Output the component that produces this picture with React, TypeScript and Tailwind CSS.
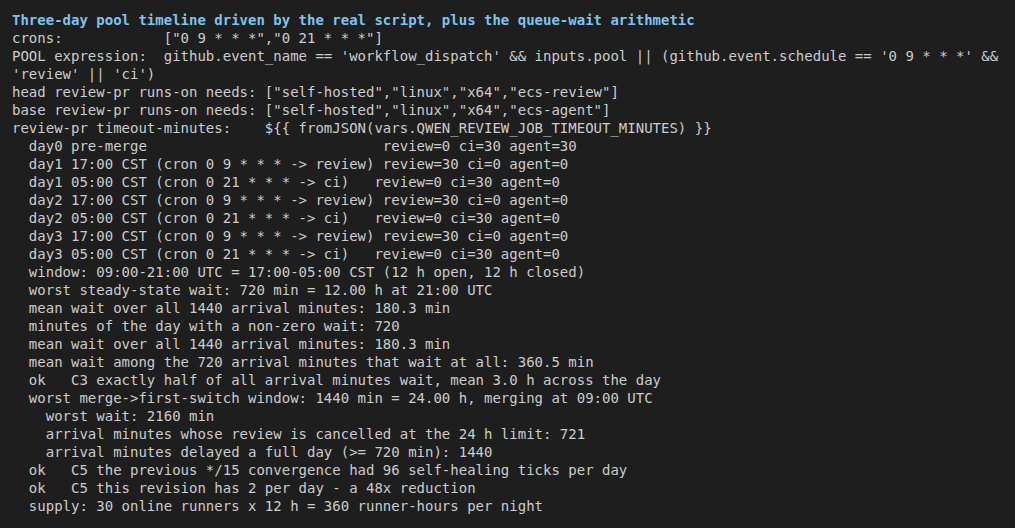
const lines: string[] = [
  "crons:            [\"0 9 * * *\",\"0 21 * * *\"]",
  "POOL expression:  github.event_name == 'workflow_dispatch' && inputs.pool || (github.event.schedule == '0 9 * * *' &&",
  "'review' || 'ci')",
  "head review-pr runs-on needs: [\"self-hosted\",\"linux\",\"x64\",\"ecs-review\"]",
  "base review-pr runs-on needs: [\"self-hosted\",\"linux\",\"x64\",\"ecs-agent\"]",
  "review-pr timeout-minutes:    ${{ fromJSON(vars.QWEN_REVIEW_JOB_TIMEOUT_MINUTES) }}",
  "  day0 pre-merge                            review=0 ci=30 agent=30",
  "  day1 17:00 CST (cron 0 9 * * * -> review) review=30 ci=0 agent=0",
  "  day1 05:00 CST (cron 0 21 * * * -> ci)   review=0 ci=30 agent=0",
  "  day2 17:00 CST (cron 0 9 * * * -> review) review=30 ci=0 agent=0",
  "  day2 05:00 CST (cron 0 21 * * * -> ci)   review=0 ci=30 agent=0",
  "  day3 17:00 CST (cron 0 9 * * * -> review) review=30 ci=0 agent=0",
  "  day3 05:00 CST (cron 0 21 * * * -> ci)   review=0 ci=30 agent=0",
  "  window: 09:00-21:00 UTC = 17:00-05:00 CST (12 h open, 12 h closed)",
  "  worst steady-state wait: 720 min = 12.00 h at 21:00 UTC",
  "  mean wait over all 1440 arrival minutes: 180.3 min",
  "  minutes of the day with a non-zero wait: 720",
  "  mean wait over all 1440 arrival minutes: 180.3 min",
  "  mean wait among the 720 arrival minutes that wait at all: 360.5 min",
  "  ok   C3 exactly half of all arrival minutes wait, mean 3.0 h across the day",
  "  worst merge->first-switch window: 1440 min = 24.00 h, merging at 09:00 UTC",
  "    worst wait: 2160 min",
  "    arrival minutes whose review is cancelled at the 24 h limit: 721",
  "    arrival minutes delayed a full day (>= 720 min): 1440",
  "  ok   C5 the previous */15 convergence had 96 self-healing ticks per day",
  "  ok   C5 this revision has 2 per day - a 48x reduction",
  "  supply: 30 online runners x 12 h = 360 runner-hours per night",
];

export default function App() {
  return (
    <div className="min-h-screen w-full bg-[#1e1e1e] pl-3 pt-[11px] font-['DejaVu_Sans_Mono',monospace] text-[14px] leading-[18px] text-[#cccccc]">
      <div className="whitespace-pre font-bold text-[#7cc4ee]">
        Three-day pool timeline driven by the real script, plus the queue-wait arithmetic
      </div>
      {lines.map((line, i) => (
        <div key={i} className="whitespace-pre">
          {line}
        </div>
      ))}
    </div>
  );
}
